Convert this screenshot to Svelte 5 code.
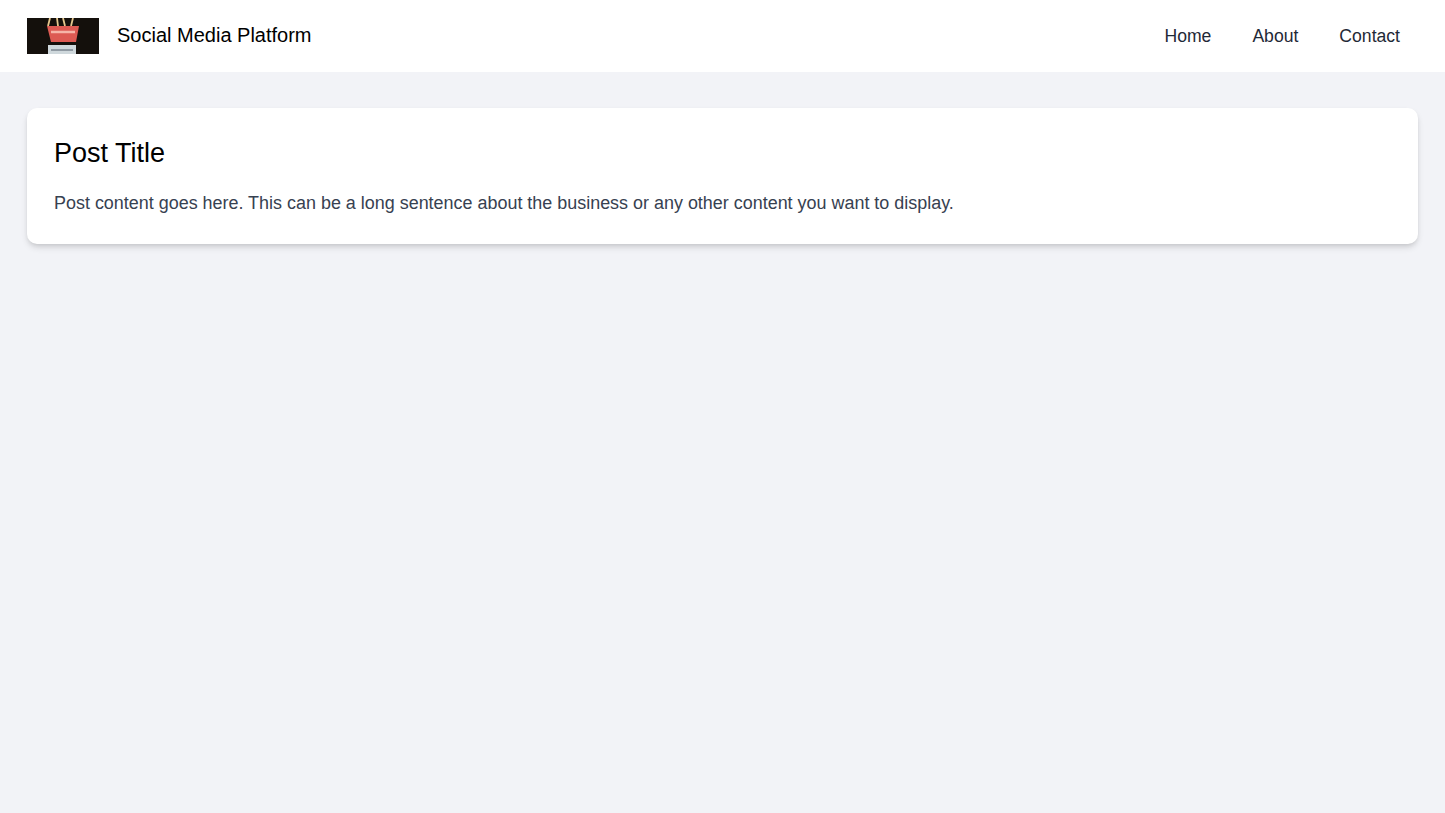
<script>
    const links = ["Home", "About", "Contact"];
</script>

<header class="topbar">
    <div class="brand">
        <svg class="logo" viewBox="0 0 72 36" aria-hidden="true">
            <defs>
                <filter id="soft" x="-5%" y="-5%" width="110%" height="110%">
                    <feGaussianBlur stdDeviation="0.5" />
                </filter>
            </defs>
            <rect width="72" height="36" fill="#14100c" />
            <g filter="url(#soft)">
                <path d="M23 0 L21 8 M30 0 L31 8 M36 0 L38 8 M46 0 L44 8" stroke="#e6c88e" stroke-width="1.8" fill="none" />
                <path d="M20 8 H52 L49 24 H24 Z" fill="#dd5a52" />
                <path d="M24 14 H48" stroke="#f6b5a8" stroke-width="2.5" />
                <rect x="21" y="27" width="28" height="9" fill="#cfd8dc" />
                <path d="M24 32 H46" stroke="#66717c" stroke-width="1.2" />
            </g>
        </svg>
        <span class="name">Social Media Platform</span>
    </div>
    <nav class="links">
        {#each links as link}
            <a href="#top">{link}</a>
        {/each}
    </nav>
</header>

<main class="content">
    <article class="post">
        <h2>Post Title</h2>
        <p>Post content goes here. This can be a long sentence about the business or any other content you want to display.</p>
    </article>
</main>

<style>
    :global(body) {
        background: #f2f3f7;
        font-family: "Liberation Sans", Arial, sans-serif;
        min-height: 813px;
    }
    .topbar {
        display: flex;
        justify-content: space-between;
        align-items: center;
        height: 72px;
        padding: 0 27px;
        background: #fff;
    }
    .brand {
        display: flex;
        align-items: center;
        gap: 18px;
    }
    .logo {
        display: block;
        width: 72px;
        height: 36px;
    }
    .name {
        padding-bottom: 2px;
        font-size: 20px;
        line-height: 27px;
        color: #000;
    }
    .links {
        display: flex;
        gap: 5px;
    }
    .links a {
        padding: 0 18px;
        font-size: 17.6px;
        line-height: 27px;
        color: #1f2937;
        text-decoration: none;
    }
    .content {
        padding: 36px 27px;
    }
    .post {
        padding: 27px;
        background: #fff;
        border-radius: 10px;
        box-shadow: 0 4px 7px -1px rgba(0, 0, 0, 0.14), 0 2px 4px -1px rgba(0, 0, 0, 0.08);
    }
    .post h2 {
        margin: 0 0 18px;
        font-size: 27px;
        line-height: 36px;
        font-weight: 400;
        color: #000;
    }
    .post p {
        margin: 0;
        font-size: 17.94px;
        line-height: 28px;
        color: #374151;
    }
</style>
